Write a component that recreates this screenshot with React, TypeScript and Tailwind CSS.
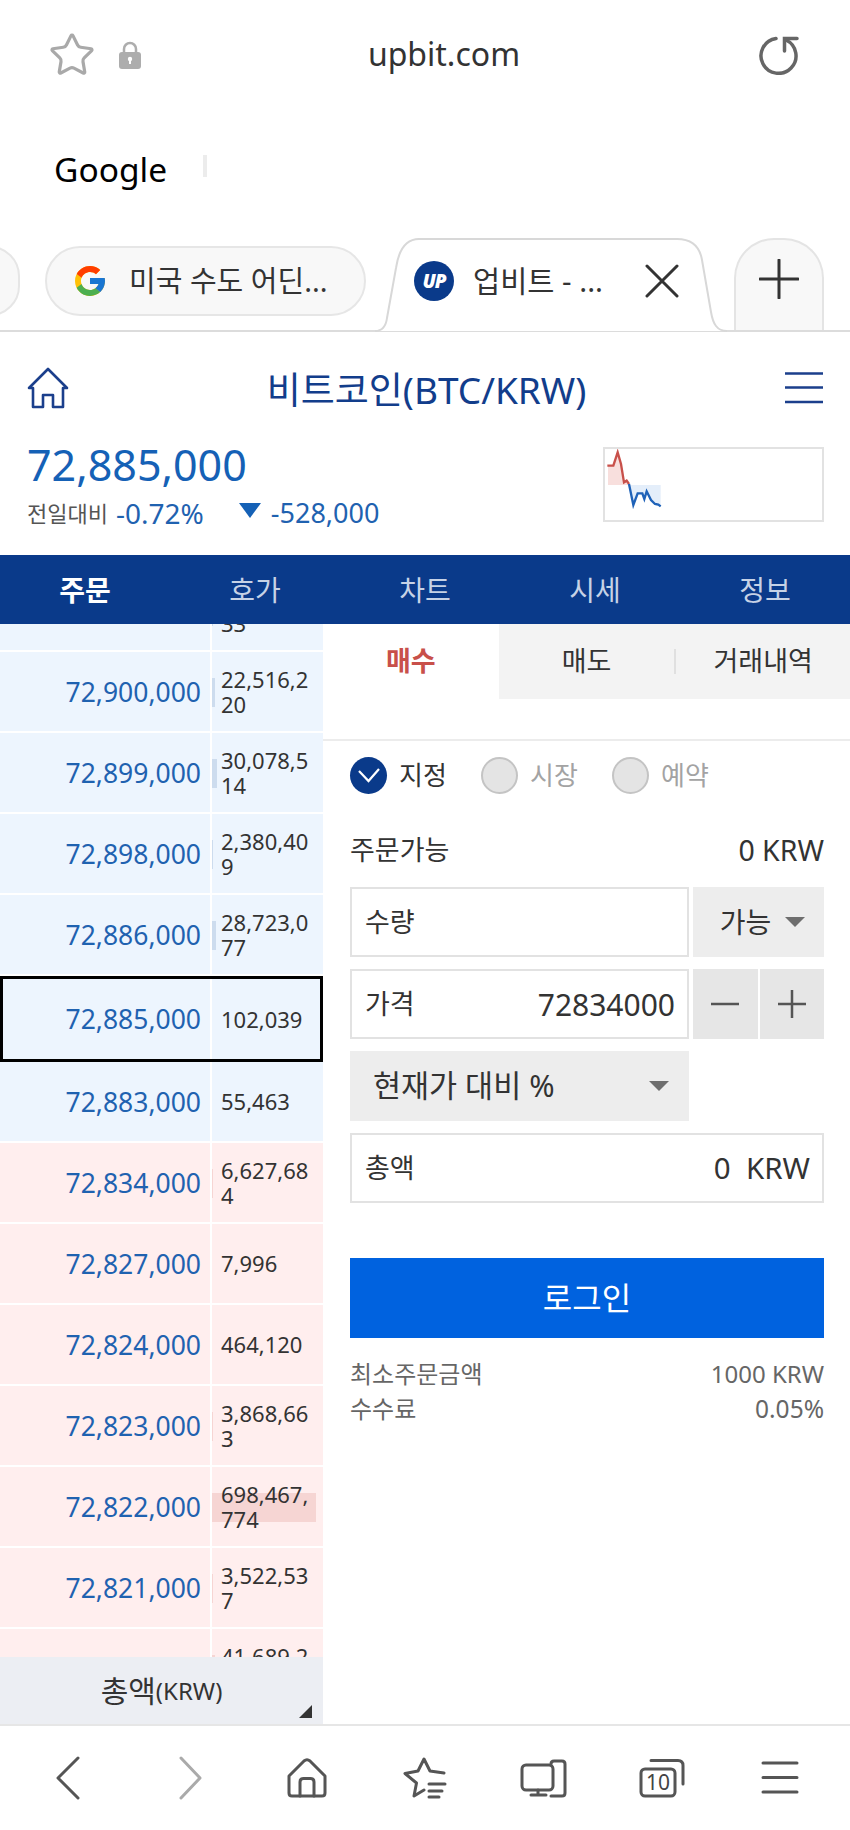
import { Star } from 'lucide-react';
import { FcGoogle } from 'react-icons/fc';

type Row = { price: string; vol: string; bar?: number };

// first and last rows are mostly scrolled out of view, only a sliver of the volume shows
const askRows: Row[] = [
  { price: '', vol: '1,204,5633', bar: 1 },
  { price: '72,900,000', vol: '22,516,220', bar: 3 },
  { price: '72,899,000', vol: '30,078,514', bar: 5 },
  { price: '72,898,000', vol: '2,380,409', bar: 1 },
  { price: '72,886,000', vol: '28,723,077', bar: 4 },
];

const bidRows: Row[] = [
  { price: '72,834,000', vol: '6,627,684', bar: 1 },
  { price: '72,827,000', vol: '7,996' },
  { price: '72,824,000', vol: '464,120' },
  { price: '72,823,000', vol: '3,868,663', bar: 1 },
  { price: '72,822,000', vol: '698,467,774', bar: 104 },
  { price: '72,821,000', vol: '3,522,537', bar: 1 },
  { price: '', vol: '41,689,232', bar: 3 },
];

function BookRow({ row, tone }: { row: Row; tone: 'ask' | 'bid' }) {
  return (
    <div className={`grid h-[81px] shrink-0 grid-cols-[210px_113px] border-b-2 border-white ${tone === 'ask' ? 'bg-[#edf5fe]' : 'bg-[#ffeeee]'}`}>
      <div className="flex items-center justify-end pr-[9px] text-[26.500px] leading-[36px] text-[#1f62b0]">{row.price}</div>
      <div className="relative flex items-center border-l-2 border-white pr-[12px] pl-[9px]">
        {row.bar ? (
          <div
            className={`absolute top-[26px] left-0 h-[29px] ${tone === 'ask' ? 'bg-[#cddcee]' : 'bg-[#f6d5d3]'}`}
            style={{ width: row.bar }}
          />
        ) : null}
        <span className="relative text-[22px] leading-[25px] break-all text-[#333]">{row.vol}</span>
      </div>
    </div>
  );
}

function Radio({ label, checked }: { label: string; checked?: boolean }) {
  return (
    <div className="flex w-[131px] items-center gap-[12px]">
      {checked ? (
        <div className="flex h-[37px] w-[37px] items-center justify-center rounded-full bg-[#0a3a8a]">
          <svg width="24" height="18" viewBox="0 0 24 18" fill="none" stroke="#fff" strokeWidth="2.2">
            <path d="M2 5l9.5 10L22 3" />
          </svg>
        </div>
      ) : (
        <div className="h-[37px] w-[37px] rounded-full border-2 border-[#c4c4c4] bg-[#e4e4e4]" />
      )}
      <span className={`text-[26px] leading-[36px] ${checked ? 'text-[#333]' : 'text-[#a3a3a3]'}`}>{label}</span>
    </div>
  );
}

function Caret() {
  return <div className="h-0 w-0 border-x-[10px] border-t-[10px] border-x-transparent border-t-[#6e6e6e]" />;
}

function BottomNav() {
  return (
    <div className="grid h-[106px] shrink-0 grid-cols-7 items-center border-t-2 border-[#e6e6e6] px-[9px] pb-[1px]">
      <svg className="mx-auto" width="48" height="48" viewBox="0 0 48 48" fill="none" stroke="#555" strokeWidth="3" strokeLinecap="round" strokeLinejoin="round">
        <path d="M34 4L14 24l20 20" />
      </svg>
      <svg className="mx-auto" width="48" height="48" viewBox="0 0 48 48" fill="none" stroke="#aaa" strokeWidth="3" strokeLinecap="round" strokeLinejoin="round">
        <path d="M18 4l19 20-19 20" />
      </svg>
      <svg className="mx-auto" width="48" height="48" viewBox="0 0 48 48" fill="none" stroke="#555" strokeWidth="3" strokeLinecap="round" strokeLinejoin="round">
        <path d="M7 22L22 7q3-2.5 6 0l15 15v17q0 3-3 3H10q-3 0-3-3z" />
        <path d="M18 42V28q0-3.500 3.500-3.500h7q3.500 0 3.500 3.500v14" />
      </svg>
      <svg className="mx-auto" width="48" height="48" viewBox="0 0 48 48" fill="none" stroke="#555" strokeWidth="3" strokeLinecap="round" strokeLinejoin="round">
        <path d="M23 36l-10 6 2.500-13L4 19.500 17 17l6-12 6 12 14 2" />
        <path d="M28 30h16M28 37h13M28 43h10" />
      </svg>
      <svg className="mx-auto" width="48" height="48" viewBox="0 0 48 48" fill="none" stroke="#555" strokeWidth="3" strokeLinecap="round" strokeLinejoin="round">
        <rect x="2" y="11" width="31" height="25" rx="4" />
        <path d="M18 36v5M11 41h15" />
        <path d="M31 10q0-3 3-3h8q3 0 3 3v29q0 3-3 3H31" />
      </svg>
      <svg className="mx-auto" width="48" height="48" viewBox="0 0 48 48" fill="none" stroke="#555" strokeWidth="3" strokeLinecap="round" strokeLinejoin="round">
        <rect x="2" y="15" width="34" height="27" rx="4" />
        <path d="M12 6.500h27q5 0 5 5V30" />
        <text x="19" y="36" textAnchor="middle" fontSize="21" fill="#444" stroke="none">10</text>
      </svg>
      <svg className="mx-auto" width="48" height="48" viewBox="0 0 48 48" fill="none" stroke="#555" strokeWidth="3" strokeLinecap="round">
        <path d="M5 9h34M5 23.500h34M5 38h34" />
      </svg>
    </div>
  );
}

export default function App() {
  return (
    <div className="flex h-[1830px] w-[850px] flex-col overflow-hidden bg-white font-['Noto_Sans','Noto_Sans_CJK_KR',sans-serif]">
      {/* browser chrome */}
      <div className="grid h-[110px] shrink-0 grid-cols-[1fr_auto_1fr] items-center">
        <div className="flex items-center pl-[48px]">
          <Star size={48} strokeWidth={1.6} className="text-[#a9a9a9]" />
          <svg className="ml-[23px]" width="22" height="28" viewBox="0 0 22 28">
            <path d="M5 13V8a6 6 0 0 1 12 0v5" fill="none" stroke="#adadad" strokeWidth="2.500" />
            <rect x="0" y="11" width="22" height="17" rx="3" fill="#adadad" />
            <circle cx="11" cy="18" r="2.200" fill="#fff" />
            <rect x="10" y="18" width="2" height="5" fill="#fff" />
          </svg>
        </div>
        <div className="mb-[2px] ml-[38px] text-[32px] leading-[44px] text-[#333]">upbit.com</div>
        <div className="flex justify-end pr-[51px]">
          <svg width="40" height="40" viewBox="0 0 40 40" fill="none" stroke="#666" strokeWidth="3.500" strokeLinecap="round">
            <path d="M17 3.500A17.500 17.500 0 1 0 27 5" />
            <path d="M38 3.500H25.500V16" />
          </svg>
        </div>
      </div>

      <div className="flex h-[128px] shrink-0 items-start pt-[36px] pl-[54px]">
        <span className="text-[33.500px] leading-[46px] text-black">Google</span>
        <div className="mt-[9px] ml-[36px] h-[22px] w-[4px] bg-[#ececec]" />
      </div>

      <div className="flex h-[94px] shrink-0 items-start border-b-2 border-[#dcdcdc]">
        <div className="mt-[8px] -ml-[40px] h-[70px] w-[60px] shrink-0 rounded-full border-2 border-[#e6e6e6] bg-[#f8f8f8]" />
        <div className="mt-[8px] ml-[25px] flex h-[70px] w-[321px] shrink-0 items-center rounded-full border-2 border-[#e6e6e6] bg-[#f8f8f8] pl-[25px]">
          <FcGoogle size={36} className="shrink-0" />
          <span className="ml-[21px] text-[29px] leading-[40px] whitespace-nowrap text-[#333]">미국 수도 어딘...</span>
        </div>
        <div className="relative ml-[9px] flex h-[94px] w-[352px] shrink-0 items-start pt-[23px] pl-[39px]">
          <svg className="absolute top-0 left-0" width="352" height="95" viewBox="0 0 352 95" fill="#fff" stroke="#d8d8d8" strokeWidth="2">
            <path d="M0 93c8 0 11-5 12-13l9-50c3-20 11-29 23-29h258c16 0 23 9 25 21l9 52c2 12 6 19 16 19" />
          </svg>
          <div className="relative flex h-[40px] w-[40px] items-center justify-center rounded-full bg-[#0a3a8a] text-[19px] font-black tracking-[-1px] text-white italic">UP</div>
          <span className="relative ml-[19px] text-[29.500px] leading-[40px] whitespace-nowrap text-[#333]">업비트 - ...</span>
          <svg className="absolute top-[26px] left-[270px]" width="34" height="34" viewBox="0 0 34 34" fill="none" stroke="#333" strokeWidth="3" strokeLinecap="round">
            <path d="M2 2l30 30M32 2L2 32" />
          </svg>
        </div>
        <div className="ml-[7px] flex h-[92px] w-[90px] shrink-0 items-center justify-center rounded-t-[40px] border-2 border-b-0 border-[#e4e4e4] bg-[#f8f8f8] pb-[12px]">
          <svg width="40" height="40" viewBox="0 0 40 40" fill="none" stroke="#333" strokeWidth="3" strokeLinecap="round">
            <path d="M20 1v38M1 20h38" />
          </svg>
        </div>
      </div>

      {/* upbit header */}
      <div className="flex h-[223px] shrink-0 flex-col pr-[26px] pl-[27px]">
        <div className="flex h-[112px] shrink-0 items-center justify-between">
          <svg width="42" height="42" viewBox="0 0 42 42" fill="none" stroke="#1b3f8c" strokeWidth="2.600" strokeLinejoin="round">
            <path d="M2 21L21 2l19 19h-4v19H26V28H16v12H6V21z" />
          </svg>
          <div className="pt-[4px] text-[37px] leading-[50px] whitespace-nowrap text-[#123d8b]">비트코인(BTC/KRW)</div>
          <svg width="40" height="32" viewBox="0 0 40 32" fill="none" stroke="#1b3f8c" strokeWidth="2.400">
            <path d="M1 1.500h38M1 15.500h38M1 30h38" />
          </svg>
        </div>
        <div className="flex items-start justify-between">
          <div>
            <div className="h-[42px] text-[43px] leading-[42px] text-[#1561b6]">72,885,000</div>
            <div className="flex h-[54px] items-center">
              <span className="text-[22px] leading-[34px] text-[#555]">전일대비</span>
              <span className="ml-[8px] text-[28px] leading-[34px] text-[#1f62b0]">-0.72%</span>
              <div className="mb-[6px] ml-[35px] h-0 w-0 border-x-[11px] border-t-[15px] border-x-transparent border-t-[#1561b6]" />
              <span className="ml-[10px] text-[27px] leading-[34px] text-[#1f62b0]">-528,000</span>
            </div>
          </div>
          <div className="mt-[3px] h-[75px] w-[221px] border-2 border-[#e2e2e2]">
            <svg width="217" height="71" viewBox="0 0 651 213" fill="none">
              <path d="M9 108V50h16l13-40 10 35 9 55 8-5 7 13z" fill="#f8dfdd" />
              <path d="M72 108l13 63 13-35h14l6 17 7-23 13 26 12 12 10 2 7 5V108z" fill="#e4eefa" />
              <path d="M7 50h18l13-40 10 35 9 55 8-5 7 10" stroke="#c8504a" strokeWidth="7" />
              <path d="M72 105l13 63 13-35h14l6 17 7-23 13 26 12 12 10 2 7 5" stroke="#1f62b8" strokeWidth="7" />
            </svg>
          </div>
        </div>
      </div>

      <div className="grid h-[69px] shrink-0 grid-cols-5 items-center bg-[#0a3a8a] text-center text-[28px] text-[#c6d2e6]">
        <div className="font-bold text-white">주문</div>
        <div>호가</div>
        <div>차트</div>
        <div>시세</div>
        <div>정보</div>
      </div>

      {/* order book + order form */}
      <div className="flex h-[1100px] shrink-0">
        <div className="flex w-[323px] shrink-0 flex-col">
          <div className="h-[1033px] overflow-hidden">
            <div className="-mt-[53px] flex flex-col">
              {askRows.map((r) => (
                <BookRow key={r.vol} row={r} tone="ask" />
              ))}
              <div className="grid h-[86px] shrink-0 grid-cols-[207px_113px] border-[3px] border-black bg-[#edf5fe]">
                <div className="flex items-center justify-end pr-[9px] text-[26.500px] leading-[36px] text-[#1f62b0]">72,885,000</div>
                <div className="flex items-center border-l-2 border-white pl-[9px] text-[22px] text-[#333]">102,039</div>
              </div>
              <BookRow row={{ price: '72,883,000', vol: '55,463' }} tone="ask" />
              {bidRows.map((r) => (
                <BookRow key={r.vol} row={r} tone="bid" />
              ))}
            </div>
          </div>
          <div className="relative flex h-[67px] shrink-0 items-center justify-center bg-[#eceef3] text-[#333]">
            <span className="text-[30px] leading-[40px]">총액</span>
            <span className="text-[24px] leading-[40px]">(KRW)</span>
            <svg className="absolute right-[11px] bottom-[6px]" width="13" height="13" viewBox="0 0 13 13">
              <path d="M13 0v13H0z" fill="#333" />
            </svg>
          </div>
        </div>

        <div className="flex min-w-0 flex-1 flex-col">
          <div className="grid h-[75px] shrink-0 grid-cols-3 items-center text-center text-[27px] text-[#333]">
            <div className="flex h-full items-center justify-center font-bold text-[#c8504a]">매수</div>
            <div className="flex h-full items-center justify-center bg-[#f3f3f3]">매도</div>
            <div className="flex h-full items-center justify-center bg-[#f3f3f3]">
              <div className="h-[25px] w-[2px] bg-[#e0e0e0]" />
              <span className="mx-auto">거래내역</span>
            </div>
          </div>
          <div className="h-[42px] shrink-0 border-b-2 border-[#ececec]" />

          <div className="flex flex-1 flex-col pr-[26px] pl-[27px]">
            <div className="flex h-[66px] shrink-0 items-center pt-[2px]">
              <Radio label="지정" checked />
              <Radio label="시장" />
              <Radio label="예약" />
            </div>

            <div className="mt-[21px] mb-[15px] flex h-[44px] shrink-0 items-center justify-between text-[#333]">
              <span className="text-[27px]">주문가능</span>
              <span className="text-[28.500px]">0 KRW</span>
            </div>

            <div className="flex flex-col gap-[12px] text-[#333]">
              <div className="flex h-[70px] gap-[4px]">
                <div className="flex w-[339px] items-center border-2 border-[#e2e2e2] px-[13px] text-[27px]">수량</div>
                <div className="flex flex-1 items-center justify-center gap-[14px] bg-[#ededed] pl-[8px] text-[28px]">
                  가능
                  <Caret />
                </div>
              </div>
              <div className="flex h-[70px] gap-[4px]">
                <div className="flex w-[339px] items-center justify-between border-2 border-[#e2e2e2] pr-[12px] pl-[13px]">
                  <span className="text-[27px]">가격</span>
                  <span className="text-[30px]">72834000</span>
                </div>
                <div className="flex flex-1 gap-[2px]">
                  <div className="flex flex-1 items-center justify-center bg-[#e6e6e6]">
                    <svg width="28" height="4" viewBox="0 0 28 4"><path d="M0 2h28" stroke="#555" strokeWidth="2.500" /></svg>
                  </div>
                  <div className="flex flex-1 items-center justify-center bg-[#e6e6e6]">
                    <svg width="28" height="28" viewBox="0 0 28 28"><path d="M0 14h28M14 0v28" stroke="#555" strokeWidth="2.500" /></svg>
                  </div>
                </div>
              </div>
              <div className="flex h-[70px] w-[339px] items-center justify-between bg-[#ededed] pr-[20px] pl-[23px] text-[30.500px]">
                현재가 대비 %
                <Caret />
              </div>
              <div className="flex h-[70px] items-center justify-between border-2 border-[#e2e2e2] pr-[12px] pl-[13px]">
                <span className="text-[27px]">총액</span>
                <span className="text-[29.500px] whitespace-pre">0  KRW</span>
              </div>
            </div>

            <div className="mt-[55px] flex h-[80px] shrink-0 items-center justify-center bg-[#0062df] text-[32px] text-white">로그인</div>

            <div className="mt-[18px] flex h-[35px] items-center justify-between text-[#666]">
              <span className="text-[24px] leading-[34px]">최소주문금액</span>
              <span className="text-[24px] leading-[34px]">1000 KRW</span>
            </div>
            <div className="flex h-[35px] items-center justify-between text-[#666]">
              <span className="text-[24px] leading-[34px]">수수료</span>
              <span className="text-[24.500px] leading-[34px]">0.05%</span>
            </div>
          </div>
        </div>
      </div>

      <BottomNav />
    </div>
  );
}
